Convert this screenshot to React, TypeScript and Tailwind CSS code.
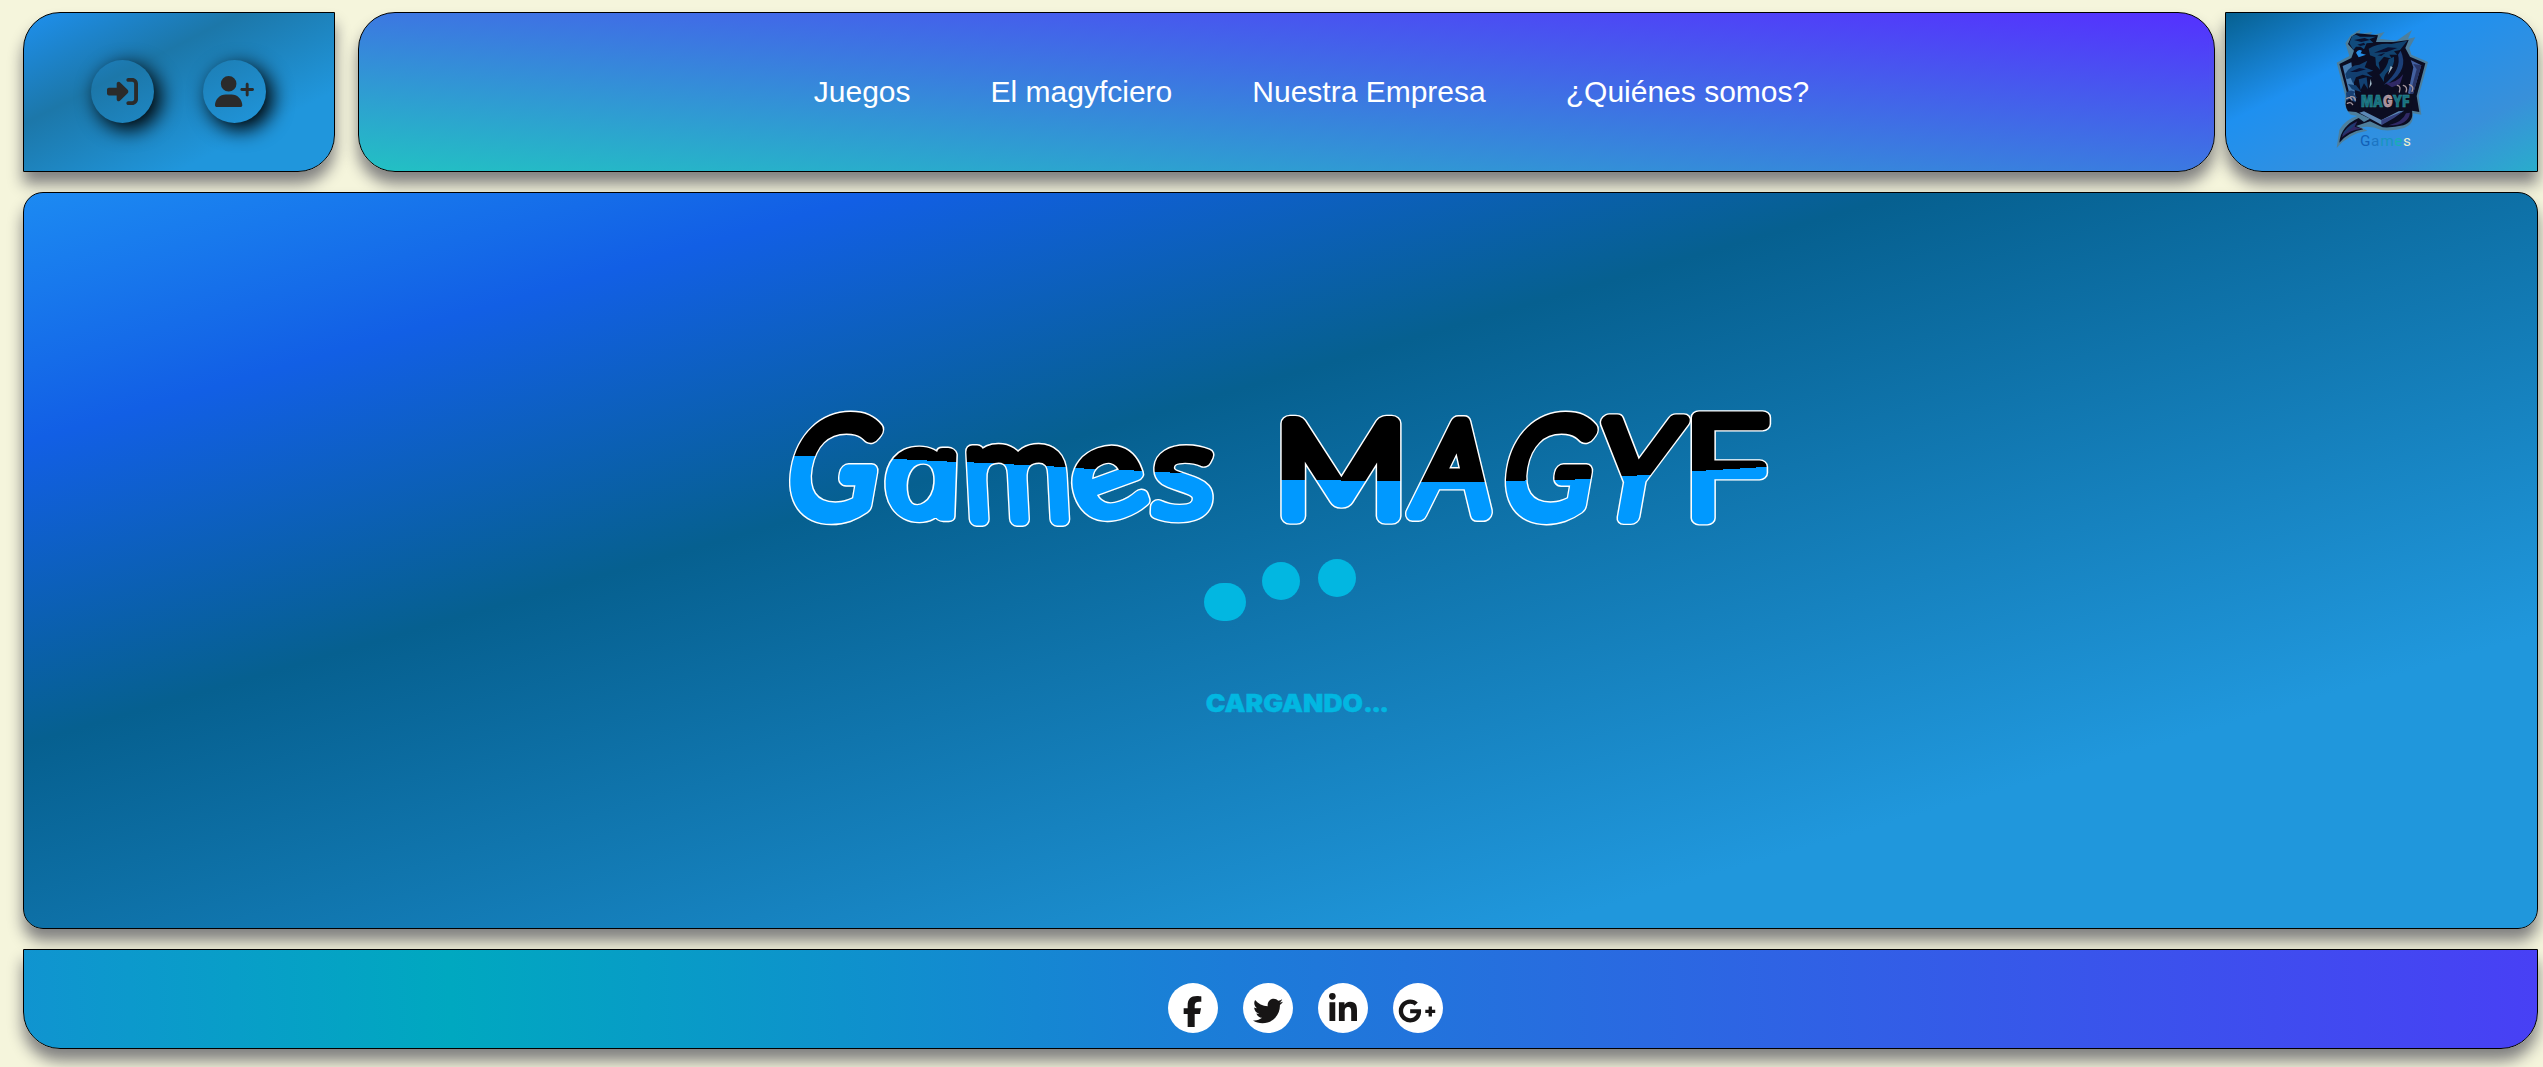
import { useLayoutEffect, useState } from "react";
import type { ReactNode } from "react";
import { FaFacebookF, FaGooglePlusG, FaLinkedinIn, FaRightToBracket, FaTwitter, FaUserPlus } from "react-icons/fa6";

const shadow = "shadow-[0_12px_15px_gray]";

// Ink box of a letter in the title drawing, and where the colour change crosses it.
type Letter = {
  ch: string;
  x1: number;
  x2: number;
  y1: number;
  y2: number;
  wave: number;
  slope: number;
  stroke: number;
  font?: string;
  italic?: boolean;
  skew?: number;
  turn?: number;
};

const LETTERS: Letter[] = [
  { ch: "G", x1: 5.5, x2: 101.5, y1: 10, y2: 124, wave: 56.5, slope: 0.02, stroke: 15.5, skew: -10, font: "Lato" },
  { ch: "a", x1: 105, x2: 179.5, y1: 46, y2: 123, wave: 60.3, slope: 0.05, stroke: 13.5, italic: true, skew: 12 },
  { ch: "m", x1: 185, x2: 288.5, y1: 43, y2: 126, wave: 64.7, slope: 0.05, stroke: 13.5, skew: 3 },
  { ch: "e", x1: 291, x2: 364.5, y1: 46, y2: 122, wave: 69.5, slope: 0.04, stroke: 13.5, turn: -20 },
  { ch: "s", x1: 370, x2: 433, y1: 45, y2: 123, wave: 73, slope: 0.04, stroke: 13.5, skew: -3 },
  { ch: "M", x1: 500, x2: 620, y1: 13, y2: 124, wave: 80.5, slope: 0.015, stroke: 16.5, font: "Lato" },
  { ch: "A", x1: 628, x2: 720, y1: 16, y2: 121, wave: 82, slope: 0.005, stroke: 15.5, skew: -7 },
  { ch: "G", x1: 721, x2: 816, y1: 10, y2: 124, wave: 80, slope: -0.02, stroke: 15.5, skew: -10, font: "Lato" },
  { ch: "Y", x1: 808, x2: 904, y1: 13, y2: 124, wave: 75.5, slope: -0.05, stroke: 14.5, skew: -10 },
  { ch: "F", x1: 911, x2: 990, y1: 10, y2: 125, wave: 69, slope: -0.06, stroke: 14 },
];

type Fit = { matrix: string; inverse: string; scale: number };

function fitLetter(ctx: CanvasRenderingContext2D, l: Letter): Fit {
  ctx.font = `${l.italic ? "italic " : ""}300 100px "${l.font ?? "Open Sans"}"`;
  const m = ctx.measureText(l.ch);
  const left = -m.actualBoundingBoxLeft;
  const w = m.actualBoundingBoxRight - left;
  const top = -m.actualBoundingBoxAscent;
  const h = m.actualBoundingBoxDescent - top;
  const sh = l.y2 - l.y1 - l.stroke;
  const lean = Math.abs(Math.tan(((l.skew ?? 0) * Math.PI) / 180)) * sh * 0.4;
  const sw = l.x2 - l.x1 - l.stroke - (l.italic ? -lean : lean);
  const mx = new DOMMatrix()
    .translate((l.x1 + l.x2) / 2, (l.y1 + l.y2) / 2)
    .rotate(l.turn ?? 0)
    .skewX(l.skew ?? 0)
    .scale(sw / w, sh / h)
    .translate(-(left + w / 2), -(top + h / 2));
  return { matrix: mx.toString(), inverse: mx.inverse().toString(), scale: Math.sqrt((sw / w) * (sh / h)) };
}

function Title() {
  const [fits, setFits] = useState<Fit[]>([]);
  useLayoutEffect(() => {
    const ctx = document.createElement("canvas").getContext("2d");
    if (ctx) setFits(LETTERS.map((l) => fitLetter(ctx, l)));
  }, []);

  const layer = (outline: boolean) =>
    fits.map((f, i) => {
      const l = LETTERS[i];
      const paint = outline ? "#ffffff" : `url(#wave${i})`;
      return (
        <text
          key={i}
          transform={f.matrix}
          fontFamily={`"${l.font ?? "Open Sans"}", sans-serif`}
          fontWeight={300}
          fontSize={100}
          fontStyle={l.italic ? "italic" : "normal"}
          fill={paint}
          stroke={paint}
          strokeWidth={(outline ? l.stroke + 2 : l.stroke - 0.8) / f.scale}
          strokeLinejoin="round"
        >
          {l.ch}
        </text>
      );
    });

  return (
    <svg width="1000" height="240" viewBox="0 -50 1000 240" className="-my-[50px] shrink-0 overflow-visible">
      <defs>
        {fits.map((f, i) => {
          const l = LETTERS[i];
          const cx = (l.x1 + l.x2) / 2;
          return (
            <linearGradient
              key={i}
              id={`wave${i}`}
              gradientUnits="userSpaceOnUse"
              gradientTransform={f.inverse}
              x1={cx + l.slope * 50}
              y1={l.wave - 50}
              x2={cx - l.slope * 50}
              y2={l.wave + 50}
            >
              <stop offset="0.5" stopColor="#000000" />
              <stop offset="0.5" stopColor="#0099ff" />
            </linearGradient>
          );
        })}
      </defs>
      <g aria-hidden="true">{layer(true)}</g>
      {layer(false)}
    </svg>
  );
}

function Crest() {
  return (
    <svg width="120" height="140" viewBox="0 0 360 420" className="shrink-0 -translate-x-[2px] -translate-y-[2px]">
      <path
        d="M50 384 L58 330 Q76 298 112 288 L92 284 Q68 262 76 228 L50 128 L88 108 L76 70 L92 46 L122 28 L118 42 L158 36 L146 48 L194 36 L178 56 L230 62 L276 30 L264 56 L286 52 L268 84 L274 104 L324 126 L296 228 L304 284 L278 280 Q284 312 252 324 Q218 334 184 330 Q152 316 124 322 L142 332 Q86 340 50 384 Z"
        fill="#4e7f9c"
      />
      <path
        d="M58 368 Q62 318 116 294 L132 306 L150 296 L108 276 L84 274 Q70 250 84 230 L58 132 L94 114 L102 92 L84 72 L94 50 L110 40 L174 46 L168 66 L220 66 L266 60 L256 84 L270 110 L316 130 L290 228 L298 276 L276 272 Q282 304 250 316 Q218 324 188 322 L150 304 L108 318 L130 328 Q86 336 58 368 Z"
        fill="#0b0d22"
      />
      <path d="M68 138 L94 127 L108 245 L92 238 Z" fill="#467bb0" />
      <path d="M272 120 L304 136 L278 226 L264 220 L280 142 Z" fill="#4360a0" />
      <path d="M280 132 L304 136 L278 226 L270 222 L290 148 Z" fill="#293668" />
      <path d="M118 278 L184 314 L252 272 L236 274 L184 300 L132 274 Z" fill="#5c88b5" />
      <path d="M184 300 L252 272 L222 294 L184 316 Z" fill="#35417f" />
      <path d="M88 70 L96 48 L108 44 L120 50 L168 50 L148 58 L160 68 L140 70 L132 88 L122 80 L108 80 L100 90 Z" fill="#114b7c" />
      <path d="M102 60 L134 54 L150 60 L124 66 Z M112 74 L132 68 L136 74 L122 78 Z" fill="#0b1230" />
      <path d="M108 98 Q114 86 126 92 L122 100 L138 104 L116 112 Z" fill="#238ce6" />
      <path d="M146 86 Q176 68 214 72 L262 62 L240 90 L222 94 L232 104 L208 104 L216 116 L192 110 L176 128 L180 150 L168 136 L166 112 L150 106 Z" fill="#10426f" />
      <path d="M162 98 L204 82 L232 84 L200 96 Z M172 106 L196 98 L184 108 Z" fill="#0a1030" />
      <path d="M222 110 Q226 138 202 156 Q190 168 192 186 L178 164 Q202 144 206 118 Z" fill="#10426f" />
      <path d="M242 92 Q268 148 208 188 L192 194 Q246 148 234 104 Z" fill="#1b3f78" />
      <path d="M196 190 Q232 188 250 162 L240 192 L216 202 Z" fill="#302966" />
      <path d="M76 162 Q88 136 118 134 L142 122 L134 142 L160 152 L140 158 L158 172 L128 164 L108 172 L100 192 L92 174 L80 178 Z" fill="#123f70" />
      <path d="M90 156 L118 144 L138 148 L110 156 Z" fill="#0a1030" />
      <path d="M116 178 L140 172 L144 208 L132 190 L122 210 Z M84 192 L108 196 L124 216 L96 208 Z" fill="#123f70" />
      <path d="M152 176 L155 192 L148 204 Z M212 138 L218 142 L204 164 Z" fill="#a3bac9" />
      <path d="M78 218 Q92 206 106 216 L100 222 L112 234 L98 232 L106 248 L88 236 L80 244 Z" fill="#183f72" />
      <path
        d="M80 236 Q90 228 96 240 M92 230 Q104 228 106 240 M82 250 Q92 244 98 254 M232 196 Q244 198 238 216 M250 196 Q264 200 258 216 M268 194 Q284 200 276 214"
        fill="none"
        stroke="#a7979e"
        strokeWidth="4"
        strokeLinecap="round"
      />
      <path d="M66 352 Q72 322 112 304 L104 320 L126 326 Q88 330 66 352 Z" fill="#302966" />
      <path d="M66 346 Q78 320 108 308 L98 322 Z" fill="#183d70" />
      <path d="M206 316 Q266 316 270 278 L258 280 Q248 306 206 316 Z" fill="#302966" />
      <path d="M112 222 H282 L274 268 H118 Z" fill="#0b0d20" />
      <text x="123" y="262" fontFamily='"Inter", sans-serif' fontWeight="900" fontSize="48" textLength="146" lengthAdjust="spacingAndGlyphs" fill="#18707e" stroke="#32929b" strokeWidth="1.5">
        MA<tspan fill="#a98f98" stroke="#c7b0b4">G</tspan>YF
      </text>
      <text x="120" y="379" fontFamily="Roboto, sans-serif" fontSize="46" letterSpacing="2">
        <tspan fill="#1260b6">G</tspan>
        <tspan fill="#1c75c3">a</tspan>
        <tspan fill="#1796bd">m</tspan>
        <tspan fill="#18aeb4">e</tspan>
        <tspan fill="#f0f0cd">s</tspan>
      </text>
    </svg>
  );
}

function RoundButton({ children }: { children: ReactNode }) {
  return (
    <button className="flex size-[63px] items-center justify-center rounded-full text-[#2b2b2b] shadow-[6px_6px_20px_1px_black]">
      {children}
    </button>
  );
}

function Social({ children }: { children: ReactNode }) {
  return <a className="flex size-[50px] items-center justify-center rounded-full bg-white text-[#171515]">{children}</a>;
}

export default function App() {
  return (
    <div className="flex h-[1067px] w-[2543px] flex-col overflow-hidden bg-[#f5f5dc] pt-3 pl-[23px] font-['Liberation_Sans',sans-serif]">
      <header className="flex h-40 w-[2515px] shrink-0">
        <div className={`flex w-[312px] shrink-0 items-center gap-[49px] rounded-tl-[37px] rounded-br-[37px] border border-black bg-[linear-gradient(to_bottom_right,#1e90ee,#1c77a9_35%,#2096dc_75%)] pb-px pl-[67px] ${shadow}`}>
          <RoundButton>
            <FaRightToBracket size={31} />
          </RoundButton>
          <RoundButton>
            <FaUserPlus size={39} />
          </RoundButton>
        </div>
        <nav className={`ml-[23px] flex w-[1857px] shrink-0 items-center justify-center gap-20 rounded-[37px] border border-black bg-[linear-gradient(to_top_right,#22c1c3,#5530ff)] pb-px pl-[50px] text-[30px] text-white ${shadow}`}>
          <a>Juegos</a>
          <a>El magyfciero</a>
          <a>Nuestra Empresa</a>
          <a>¿Quiénes somos?</a>
        </nav>
        <div className={`ml-[10px] flex w-[313px] shrink-0 items-center justify-center rounded-tr-[37px] rounded-bl-[37px] border border-black bg-[linear-gradient(to_bottom_right,#066090,#1e90f0_35%,#3890da_75%,#2aaccc)] ${shadow}`}>
          <Crest />
        </div>
      </header>

      <main className={`mt-5 flex h-[737px] w-[2515px] shrink-0 flex-col items-center rounded-[20px] border border-black bg-[linear-gradient(to_bottom_right,#1c8af2,#125fe5_17%,#066090_37.5%,#2097dc_80%)] pt-[207px] ${shadow}`}>
        <Title />
        <div className="mt-[18px] mr-[2px] flex h-[70px] items-start gap-[18px] text-[#02b7e1]">
          <span className="mt-[25px] h-[38px] w-[42px] rounded-full bg-current" />
          <span className="mt-1 -ml-[2px] size-[38px] rounded-full bg-current" />
          <span className="mt-px size-[38px] rounded-full bg-current" />
        </div>
        <p className="mt-[60px] ml-[32px] scale-x-110 font-['Inter',sans-serif] text-2xl leading-8 font-black text-[#02b7e1] [-webkit-text-stroke:0.4px_#02b7e1]">
          CARGANDO<span className="tracking-[-1.5px]">...</span>
        </p>
      </main>

      <footer className={`mt-5 flex h-[100px] w-[2515px] shrink-0 items-start justify-center gap-[25px] rounded-b-[37px] border border-black bg-[linear-gradient(88deg,#1094d0,#00a8c0_17%,#1c7cd8_48%,#4840f5)] pt-[33px] pl-[50px] ${shadow}`}>
        <Social>
          <FaFacebookF size={31} className="-translate-x-px translate-y-[3px]" />
        </Social>
        <Social>
          <FaTwitter size={30} className="translate-y-[3px]" />
        </Social>
        <Social>
          <FaLinkedinIn size={32} className="translate-y-px" />
        </Social>
        <Social>
          <FaGooglePlusG size={38} className="-translate-x-px translate-y-[3px]" />
        </Social>
      </footer>
    </div>
  );
}
